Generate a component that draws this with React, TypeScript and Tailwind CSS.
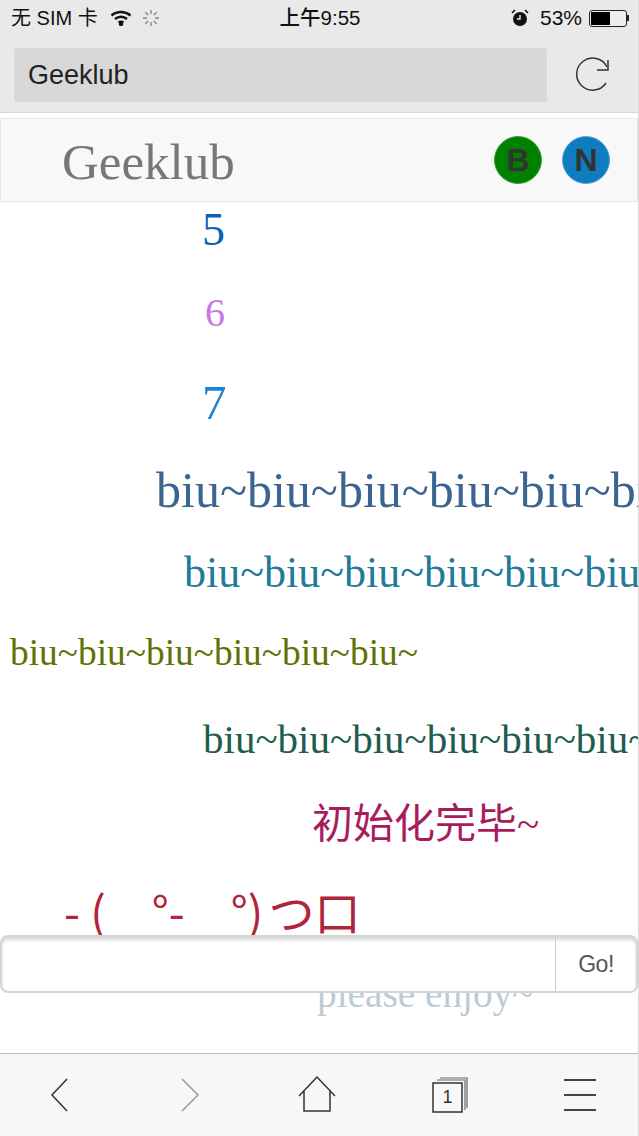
const serif = "font-['Liberation_Serif','Noto_Sans_CJK_SC',serif]";

function StatusBar() {
  return (
    <div className="h-[37px] flex items-center justify-between pl-[11px] pr-[9px] pb-[1px] text-[20px] text-[#111]">
      <div className="flex items-center w-[200px]">
        <span className="whitespace-nowrap">无 SIM 卡</span>
        <svg width="22" height="16" viewBox="0 0 22 16" fill="none" stroke="#111" strokeWidth="2.4" className="ml-[12px]">
          <path d="M1.500 5.500c5.500-4.600 13.500-4.600 19 0" />
          <path d="M5 9c3.500-3 8.500-3 12 0" />
          <path d="M8.500 12.500c1.500-1 3.500-1 5 0" />
          <circle cx="11" cy="14" r="1" fill="#111" />
        </svg>
        <svg width="18" height="18" viewBox="0 0 18 18" stroke="#888" strokeWidth="1.400" className="ml-[10px]">
          <path d="M9 1v4M9 13v4M1 9h4M13 9h4M3.300 3.300l2.800 2.800M11.900 11.900l2.800 2.800M3.300 14.700l2.800-2.800M11.900 6.100l2.800-2.800" />
        </svg>
      </div>
      <span className="font-medium whitespace-nowrap text-[20.500px]">上午9:55</span>
      <div className="flex items-center justify-end w-[200px]">
        <svg width="18" height="18" viewBox="0 0 18 18" className="mr-[11px]">
          <circle cx="9" cy="10" r="7" fill="#111" />
          <path d="M9 6v4H6" stroke="#eee" strokeWidth="1.400" fill="none" />
          <path d="M1 4l3-3M17 4l-3-3" stroke="#111" strokeWidth="1.600" />
        </svg>
        <span className="whitespace-nowrap text-[21px] mr-[7px]">53%</span>
        <div className="flex items-center">
          <div className="w-[38px] h-[17px] border border-[#222] rounded-[3px] p-[1px] bg-[#eee]">
            <div className="w-[19px] h-full bg-black" />
          </div>
          <div className="w-[2px] h-[6px] bg-[#222]" />
        </div>
      </div>
    </div>
  );
}

function UrlBar() {
  return (
    <div className="h-[76px] flex items-start pl-[14px] pt-[11px] border-b border-[#d6d6d6]">
      <div className="w-[533px] h-[54px] bg-[#d8d8d8] rounded-[3px] flex items-center pl-[14px] text-[27px] text-[#222]">
        Geeklub
      </div>
      <svg width="36" height="36" viewBox="0 0 36 36" fill="none" stroke="#333" strokeWidth="1.500" className="ml-[28px] mt-[9px]">
        <path d="M32 10A16 16 0 1 0 31 26" />
        <path d="M33 3v10H22" />
      </svg>
    </div>
  );
}

function Navbar() {
  return (
    <div className="h-[84px] shrink-0 mt-[5px] bg-[#f8f8f8] border border-[#e7e7e7] flex items-center justify-between pl-[61px] pr-[27px]">
      <span className={`${serif} text-[51px] leading-none text-[#777] mt-[4px]`}>Geeklub</span>
      <div className="flex items-center gap-[20px] mb-[1px]">
        <div className="w-[48px] h-[48px] rounded-full bg-[#008000] border border-[#2fae2f] flex items-center justify-center text-[32px] font-bold text-[#333]">B</div>
        <div className="w-[48px] h-[48px] rounded-full bg-[#0f7cc0] border border-[#4aa8e0] flex items-center justify-center text-[32px] font-bold text-[#333]">N</div>
      </div>
    </div>
  );
}

function Terminal() {
  return (
    <div className={`${serif} whitespace-nowrap overflow-hidden flex-1`}>
      <p className="pl-[202px] pt-[2px] text-[46px] leading-[52px] text-[#0c5fc0]">5</p>
      <p className="pl-[205px] mt-[35px] text-[40px] leading-[44px] text-[#c57ae0]">6</p>
      <p className="pl-[202px] mt-[40px] text-[49px] leading-[56px] text-[#1a84d8]">7</p>
      <p className="pl-[156px] mt-[31px] text-[50px] leading-[56px] text-[#3c6490]">biu~biu~biu~biu~biu~biu~</p>
      <p className="pl-[184px] mt-[30px] text-[44px] leading-[50px] text-[#237a96]">biu~biu~biu~biu~biu~biu~</p>
      <p className="pl-[10px] mt-[34px] text-[37.400px] leading-[42px] text-[#5f7305]">biu~biu~biu~biu~biu~biu~</p>
      <p className="pl-[203px] mt-[42px] text-[41px] leading-[46px] text-[#1f5c50]">biu~biu~biu~biu~biu~biu~</p>
      <p className="pl-[312px] mt-[38px] text-[41px] leading-[48px] text-[#a81c5c]">初始化完毕~</p>
      <p className="pl-[64px] mt-[36px] text-[46px] leading-[52px] text-[#b0243c] whitespace-pre font-['Noto_Sans_CJK_JP',sans-serif]">
        - (　°-　°)<span className="ml-[5px]">つ口</span>
      </p>
      <p className="pl-[317px] mt-[33px] text-[39.300px] leading-[50px] text-[#bccbd6]">please enjoy~</p>
    </div>
  );
}

function InputGroup() {
  return (
    <div className="absolute left-0 right-0 top-[935px] h-[58px] flex bg-white border-2 border-[#d4d4d4] rounded-[8px] shadow-[inset_0_3px_3px_rgba(0,0,0,0.15)]">
      <div className="flex-1" />
      <div className="w-[81px] border-l border-[#ccc] rounded-r-[6px] flex items-center justify-center text-[23px] tracking-[-0.5px] text-[#555]">Go!</div>
    </div>
  );
}

function Toolbar() {
  return (
    <div className="h-[83px] shrink-0 bg-[#f7f7f7] border-t border-[#b8b8b8] flex items-center pl-[42px]">
      <svg width="36" height="40" viewBox="0 0 36 40" fill="none" stroke="#333" strokeWidth="1.500"><path d="M25 4 10 20l15 16" /></svg>
      <svg width="36" height="40" viewBox="0 0 36 40" fill="none" stroke="#999" strokeWidth="1.500" className="ml-[93px]"><path d="M11 4l16 16-16 16" /></svg>
      <svg width="40" height="40" viewBox="0 0 40 40" fill="none" stroke="#333" strokeWidth="1.500" className="ml-[90px]"><path d="M2 21 20 2l18 19M7 16v20h26V16" /></svg>
      <div className="relative w-[36px] h-[36px] ml-[95px]">
        <svg width="36" height="36" viewBox="0 0 36 36" fill="none" stroke="#333" strokeWidth="1.500" className="absolute inset-0">
          <rect x="1" y="6" width="29" height="29" />
          <path d="M5 3h28v30M8 1h27v30" stroke="#666" strokeWidth="1.200" />
        </svg>
        <span className="absolute left-[1px] top-[6px] w-[29px] h-[29px] flex items-center justify-center text-[18px] text-[#333]">1</span>
      </div>
      <div className="w-[32px] flex flex-col gap-[13px] ml-[96px]">
        <div className="h-[2px] bg-[#444]" />
        <div className="h-[2px] bg-[#444]" />
        <div className="h-[2px] bg-[#444]" />
      </div>
    </div>
  );
}

export default function App() {
  return (
    <div className="relative h-[1136px] w-[639px] overflow-hidden flex flex-col bg-white border-r border-[#d8d8d8] font-['Liberation_Sans','Noto_Sans_CJK_SC',sans-serif]">
      <div className="bg-[#e9e9e9] shrink-0">
        <StatusBar />
        <UrlBar />
      </div>
      <Navbar />
      <Terminal />
      <InputGroup />
      <Toolbar />
    </div>
  );
}
